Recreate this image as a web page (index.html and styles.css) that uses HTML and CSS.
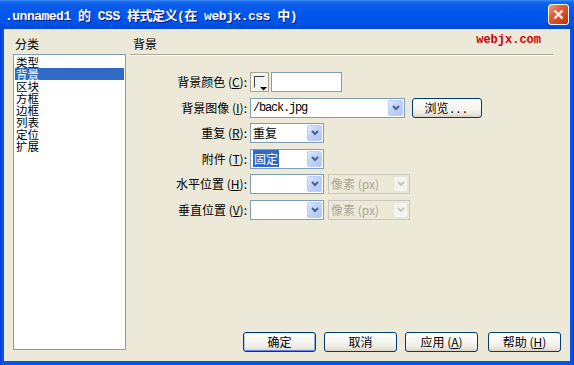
FILE: index.html
```html
<!DOCTYPE html>
<html lang="zh-CN">

<head>
    <meta charset="UTF-8">
    <title>CSS 样式定义</title>
    <link rel="stylesheet" href="styles.css">
</head>

<body>
    <div class="window">
        <div class="titlebar">
            <span class="title">.unnamed1 的 CSS 样式定义(在 webjx.css 中)</span>
            <span class="close">
                <svg width="19" height="19" viewBox="0 0 19 19"><path d="M5.5 5.5 L13.5 13.5 M13.5 5.5 L5.5 13.5" stroke="#fff" stroke-width="2.4" fill="none"/></svg>
            </span>
        </div>
        <div class="frame">
            <div class="side">
                <div class="side-label">分类</div>
                <ul class="list">
                    <li>类型</li>
                    <li class="sel">背景</li>
                    <li>区块</li>
                    <li>方框</li>
                    <li>边框</li>
                    <li>列表</li>
                    <li>定位</li>
                    <li>扩展</li>
                </ul>
            </div>
            <div class="main">
                <div class="heading">
                    <span>背景</span>
                    <span class="brand">webjx.com</span>
                </div>
                <div class="form">
                    <!-- 背景颜色 -->
                    <label>背景颜色 (<u>C</u>):</label>
                    <div class="ctl">
                        <span class="swatch">
                            <svg width="19" height="20" viewBox="0 0 19 20">
                                <rect x="0.5" y="0.5" width="18" height="19" fill="#F3F2EC" stroke="#A5A294"/>
                                <path d="M1.5 18.5 V1.5 H17.5" stroke="#fff" fill="none"/>
                                <path d="M4.5 15.5 V4.5 H14.5" stroke="#404040" fill="none"/>
                                <path d="M14.5 5 V15.5 H5" stroke="#fff" fill="none"/>
                                <path d="M10 15 H17 L13.5 18.5 Z" fill="#000"/>
                            </svg>
                        </span>
                        <span class="input"></span>
                    </div>
                    <!-- 背景图像 -->
                    <label>背景图像 (<u>I</u>):</label>
                    <div class="ctl">
                        <span class="select wide"><span class="val mono">/back.jpg</span><span class="arrow"><svg width="8" height="6" viewBox="0 0 8 6"><path d="M1 1 L4 4 L7 1" stroke="#4D6185" stroke-width="2" fill="none"/></svg></span></span>
                        <span class="btn browse">浏览<span class="dots">...</span></span>
                    </div>
                    <!-- 重复 -->
                    <label>重复 (<u>R</u>):</label>
                    <div class="ctl">
                        <span class="select"><span class="val">重复</span><span class="arrow"><svg width="8" height="6" viewBox="0 0 8 6"><path d="M1 1 L4 4 L7 1" stroke="#4D6185" stroke-width="2" fill="none"/></svg></span></span>
                    </div>
                    <!-- 附件 -->
                    <label>附件 (<u>T</u>):</label>
                    <div class="ctl">
                        <span class="select"><span class="val"><span class="hl">固定</span></span><span class="arrow"><svg width="8" height="6" viewBox="0 0 8 6"><path d="M1 1 L4 4 L7 1" stroke="#4D6185" stroke-width="2" fill="none"/></svg></span></span>
                    </div>
                    <!-- 水平位置 -->
                    <label>水平位置 (<u>H</u>):</label>
                    <div class="ctl">
                        <span class="select"><span class="val"></span><span class="arrow"><svg width="8" height="6" viewBox="0 0 8 6"><path d="M1 1 L4 4 L7 1" stroke="#4D6185" stroke-width="2" fill="none"/></svg></span></span>
                        <span class="select unit off"><span class="val">像素 (px)</span><span class="arrow"><svg width="8" height="6" viewBox="0 0 8 6"><path d="M1 1 L4 4 L7 1" stroke="#C9C7BA" stroke-width="2" fill="none"/></svg></span></span>
                    </div>
                    <!-- 垂直位置 -->
                    <label>垂直位置 (<u>V</u>):</label>
                    <div class="ctl">
                        <span class="select"><span class="val"></span><span class="arrow"><svg width="8" height="6" viewBox="0 0 8 6"><path d="M1 1 L4 4 L7 1" stroke="#4D6185" stroke-width="2" fill="none"/></svg></span></span>
                        <span class="select unit off"><span class="val">像素 (px)</span><span class="arrow"><svg width="8" height="6" viewBox="0 0 8 6"><path d="M1 1 L4 4 L7 1" stroke="#C9C7BA" stroke-width="2" fill="none"/></svg></span></span>
                    </div>
                </div>
                <div class="buttons">
                    <span class="btn default">确定</span>
                    <span class="btn">取消</span>
                    <span class="btn">应用 (<u>A</u>)</span>
                    <span class="btn help">帮助 (<u>H</u>)</span>
                </div>
            </div>
        </div>
    </div>
</body>

</html>
```

FILE: styles.css
```css
* {
    margin: 0;
    padding: 0;
    box-sizing: border-box;
}

body {
    font-family: "Noto Sans CJK SC", sans-serif;
    font-size: 12px;
    color: #000;
}

.window {
    width: 574px;
    height: 365px;
    display: flex;
    flex-direction: column;
    background: linear-gradient(to right, #0831D9 0, #0055EA 2px, #0055EA 572px, #0831D9 574px);
}

.titlebar {
    height: 29px;
    flex: none;
    display: flex;
    align-items: center;
    justify-content: space-between;
    padding: 0 5px;
    background: linear-gradient(#3D8DF7 0, #1668EE 2px, #0A5DE8 5px, #0058EE 12px, #0055E8 22px, #0047D8 29px);
}

.title {
    color: #fff;
    font-family: "Liberation Mono", "Noto Sans CJK SC", monospace;
    font-weight: bold;
    font-size: 13px;
    letter-spacing: -0.5px;
    white-space: pre;
    text-shadow: 1px 1px #0A1883;
}

.close {
    width: 21px;
    height: 21px;
    border: 1px solid #fff;
    border-radius: 3px;
    background: linear-gradient(135deg, #F0A38B 0, #E1603C 35%, #D2461F 70%, #B8330F 100%);
}

.close svg {
    display: block;
}

.frame {
    flex: 1;
    display: flex;
    gap: 4px;
    margin: 0 4px 4px;
    padding: 8px 9px 9px;
    background: #ECE9D8;
}

/* 左侧分类 */
.side {
    width: 113px;
    display: flex;
    flex-direction: column;
}

.side-label {
    line-height: 14px;
    padding-left: 2px;
    margin-bottom: 3px;
}

.list {
    flex: 1;
    list-style: none;
    margin-bottom: 2px;
    padding: 1px;
    border: 1px solid #7F9DB9;
    background: #fff;
}

.list li {
    height: 12px;
    line-height: 12px;
    font-size: 11.5px;
    padding-left: 1px;
}

.list .sel {
    background: #316AC5;
    color: #fff;
}

/* 右侧内容 */
.main {
    flex: 1;
    display: flex;
    flex-direction: column;
}

.heading {
    display: flex;
    justify-content: space-between;
    line-height: 14px;
    padding: 0 12px 3px 3px;
    margin-right: 8px;
    border-bottom: 1px solid #ACA899;
    box-shadow: 0 1px #fff;
}

.brand {
    font-family: "Liberation Mono", monospace;
    font-weight: bold;
    font-size: 12px;
    line-height: 12px;
    color: #D40000;
    margin-top: -3px;
}

.form {
    display: grid;
    grid-template-columns: 117px auto;
    grid-auto-rows: 20px;
    column-gap: 3px;
    row-gap: 5.6px;
    align-items: center;
    justify-content: start;
    margin-top: 17px;
}

.form label {
    text-align: right;
    white-space: nowrap;
    line-height: 14px;
}

.ctl {
    display: flex;
    align-items: center;
    height: 20px;
}

.swatch {
    width: 19px;
    height: 20px;
}

.swatch svg {
    display: block;
}

.input {
    width: 71px;
    height: 20px;
    margin-left: 2px;
    border: 1px solid #7F9DB9;
    background: #fff;
}

.select {
    width: 74px;
    height: 20px;
    display: flex;
    align-items: center;
    padding-left: 2px;
    border: 1px solid #7F9DB9;
    background: #fff;
}

.select.wide {
    width: 155px;
}

.select .val {
    flex: 1;
    line-height: 16px;
    white-space: nowrap;
}

.mono {
    font-family: "Liberation Mono", monospace;
    font-size: 12px;
    letter-spacing: -1.2px;
}

.hl {
    background: #316AC5;
    color: #fff;
    padding: 0 1px;
}

.arrow {
    width: 15px;
    height: 16px;
    flex: none;
    margin-right: 1px;
    display: flex;
    align-items: center;
    justify-content: center;
    border: 1px solid #B9CDF9;
    border-radius: 2px;
    background: linear-gradient(135deg, #E1EAFE 0, #C3D4FC 40%, #B2C6F5 100%);
}

.unit {
    width: 82px;
    margin-left: 4px;
}

.select.off {
    border-color: #C9C7BA;
    background: #ECE9D8;
    color: #ACA899;
}

.off .arrow {
    border-color: #E8E6DC;
    background: #F4F3EE;
}

/* 按钮 */
.btn {
    width: 73px;
    height: 20px;
    display: flex;
    align-items: center;
    justify-content: center;
    border: 1px solid #003C74;
    border-radius: 3px;
    background: linear-gradient(#FFFFFF 0, #F6F5F0 50%, #ECEAE2 80%, #D8D2C6 100%);
    white-space: nowrap;
    line-height: 14px;
}

.browse {
    width: 70px;
    margin-left: 7px;
}

.dots {
    letter-spacing: 3px;
    margin-left: 2px;
}

.buttons {
    margin-top: auto;
    display: flex;
    justify-content: flex-end;
    gap: 8px;
}

.btn.default {
    box-shadow: inset 0 1px #CEE7FF, inset 1px 0 #B8D2F7, inset -1px 0 #89ADE4, inset 0 -1px #6982EE;
}

.btn.help {
    margin-left: 2px;
}
```
